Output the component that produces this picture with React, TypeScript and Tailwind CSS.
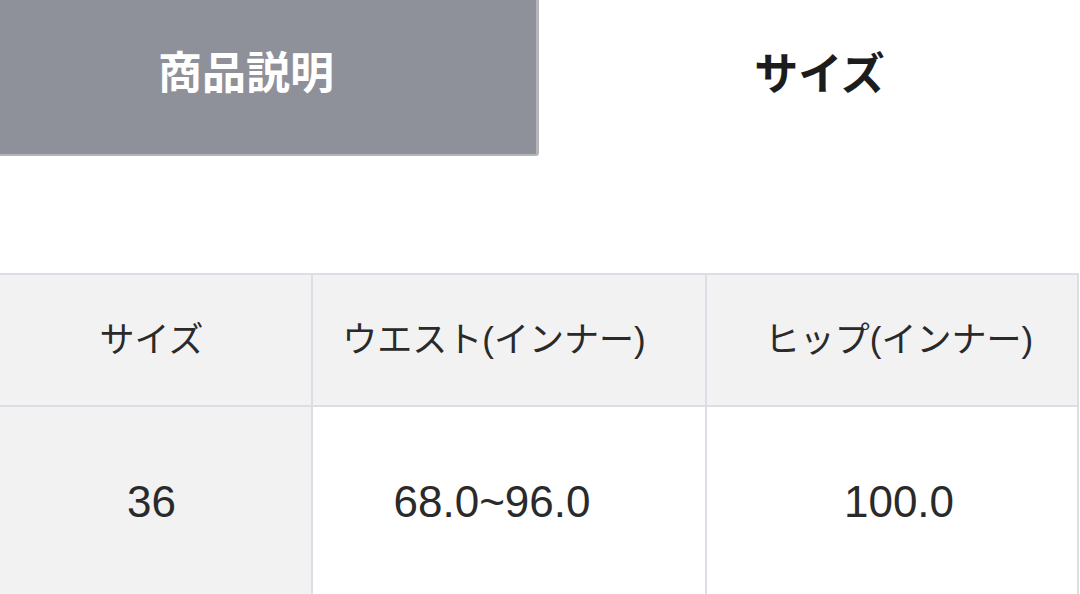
const font = { fontFamily: '"Liberation Sans", "Noto Sans CJK JP", sans-serif' };

function Cell({ children, className }: { children: React.ReactNode; className: string }) {
  return (
    <div className={`flex items-center justify-center border-r-2 border-b-2 border-[#dcdde5] text-[#2a2a2a] ${className}`}>
      {children}
    </div>
  );
}

export default function App() {
  return (
    <div className="w-[1080px] h-[594px] overflow-hidden bg-white" style={font}>
      <div className="flex h-[156px]">
        <div className="w-[539px] h-[156px] flex items-center justify-center bg-[#8e9199] border-r-[3px] border-b-2 border-[#b4b6bc] rounded-br-[3px] text-white text-[44px] font-bold pb-[7px] pr-[44px]">
          商品説明
        </div>
        <div className="flex-1 flex items-center justify-center text-[#1c1c1c] text-[44px] font-bold pb-[7px] pl-[20px]">
          サイズ
        </div>
      </div>

      <div className="mt-[117px] w-[1079px] grid grid-cols-[313px_394px_372px] border-t-2 border-[#dcdde5]">
        <Cell className="h-[132px] bg-[#f2f2f3] text-[35px] pr-[8px]">サイズ</Cell>
        <Cell className="h-[132px] bg-[#f2f2f3] text-[35px] pr-[30px]">ウエスト(インナー)</Cell>
        <Cell className="h-[132px] bg-[#f2f2f3] text-[35px] pl-[14px]">ヒップ(インナー)</Cell>
        <Cell className="h-[192px] bg-[#f2f2f3] text-[44px] pr-[8px]">36</Cell>
        <Cell className="h-[192px] bg-white text-[44px] pr-[34px]">68.0~96.0</Cell>
        <Cell className="h-[192px] bg-white text-[44px] pl-[14px]">100.0</Cell>
      </div>
    </div>
  );
}
